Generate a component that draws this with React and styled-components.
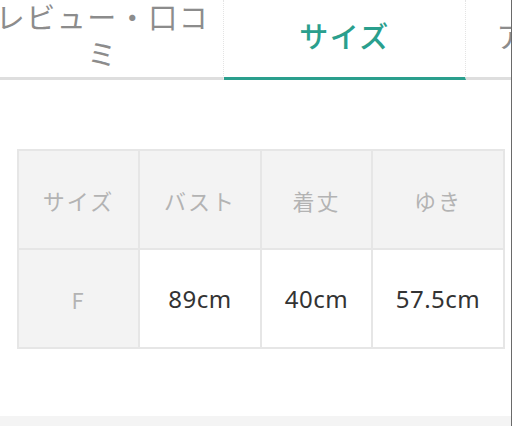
import React from "react";
import styled, { createGlobalStyle } from "styled-components";

const Global = createGlobalStyle`
  html, body { margin: 0; padding: 0; background: #fff; }
  body { font-family: "Noto Sans", "Noto Sans CJK JP", sans-serif; }
`;

const Page = styled.div`
  width: 511px;
  height: 426px;
  border-right: 1px solid #6a6a6a;
  display: flex;
  flex-direction: column;
  overflow: hidden;
  background: #fff;
`;

const TabBar = styled.div`
  display: flex;
  flex: none;
  margin-left: -18px;
  height: 80px;
`;

const Tab = styled.div`
  flex: none;
  width: 242px;
  box-sizing: border-box;
  display: flex;
  align-items: center;
  justify-content: center;
  text-align: center;
  padding: 0 12px 7px;
  font-family: "Noto Sans CJK JP", "Noto Sans", sans-serif;
  font-size: 29px;
  line-height: 37px;
  letter-spacing: 1.5px;
  color: ${(p) => (p.$active ? "#2a9f8d" : "#8c8c8c")};
  font-weight: ${(p) => (p.$active ? 500 : 400)};
  border-bottom: 3px solid ${(p) => (p.$active ? "#2a9f8d" : "#dedede")};
  border-right: 1px dotted #e4e4e4;
`;

const Content = styled.div`
  flex: 1;
  padding: 69px 8px 0 17px;
`;

const Table = styled.table`
  border-collapse: separate;
  border-spacing: 0;
  border: 1px solid #e6e6e6;
  width: 486px;
  table-layout: fixed;
`;

const Cell = styled.td`
  border: 1px solid #e6e6e6;
  height: 97px;
  padding: 0;
  text-align: center;
  vertical-align: middle;
  font-weight: 400;
  background: ${(p) => (p.$head ? "#f3f3f3" : "#fff")};
  color: ${(p) => (p.$head ? "#b3b3b3" : "#333")};
  font-family: ${(p) =>
    p.$head ? '"Noto Sans CJK JP", "Noto Sans", sans-serif' : '"Noto Sans", "Noto Sans CJK JP", sans-serif'};
  font-size: ${(p) => (p.$head ? "22px" : "24px")};
  letter-spacing: ${(p) => (p.$head ? "2px" : "0.5px")};
`;

const Footer = styled.div`
  flex: none;
  height: 10px;
  background: #f4f4f4;
`;

const widths = [121, 122, 111, 132];
const heads = ["サイズ", "バスト", "着丈", "ゆき"];
const values = ["89cm", "40cm", "57.5cm"];

export default function App() {
  return (
    <>
      <Global />
      <Page>
        <TabBar>
          <Tab>レビュー・口コミ</Tab>
          <Tab $active>サイズ</Tab>
          <Tab>アイテム詳細</Tab>
        </TabBar>
        <Content>
          <Table>
            <colgroup>
              {widths.map((w, i) => (
                <col key={i} style={{ width: w }} />
              ))}
            </colgroup>
            <tbody>
              <tr>
                {heads.map((h) => (
                  <Cell as="th" key={h} $head>
                    {h}
                  </Cell>
                ))}
              </tr>
              <tr>
                <Cell $head>F</Cell>
                {values.map((v) => (
                  <Cell key={v}>{v}</Cell>
                ))}
              </tr>
            </tbody>
          </Table>
        </Content>
        <Footer />
      </Page>
    </>
  );
}
